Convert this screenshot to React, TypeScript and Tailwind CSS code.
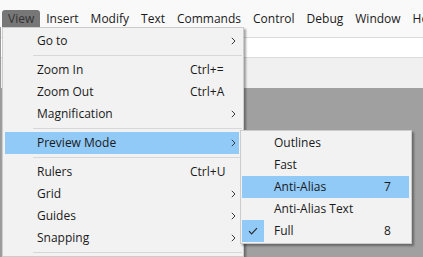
import React from 'react';

const font = { fontFamily: '"Segoe UI", "Open Sans", "Noto Sans", sans-serif' };

function Chevron() {
  return (
    <svg width="5" height="8" viewBox="0 0 5 8" className="block">
      <path d="M0.8 0.8 L4 4 L0.8 7.2" fill="none" stroke="#3a3a3a" strokeWidth="1" />
    </svg>
  );
}

function Check() {
  return (
    <svg width="10" height="8" viewBox="0 0 10 8" className="block">
      <path d="M1 4.2 L3.6 6.8 L9 1.2" fill="none" stroke="#2b2b2b" strokeWidth="1.2" />
    </svg>
  );
}

type Item =
  | { sep: true }
  | { label: string; shortcut?: string; sub?: boolean; active?: boolean; checked?: boolean };

const mainItems: Item[] = [
  { label: 'Go to', sub: true },
  { sep: true },
  { label: 'Zoom In', shortcut: 'Ctrl+=' },
  { label: 'Zoom Out', shortcut: 'Ctrl+A' },
  { label: 'Magnification', sub: true },
  { sep: true },
  { label: 'Preview Mode', sub: true, active: true },
  { sep: true },
  { label: 'Rulers', shortcut: 'Ctrl+U' },
  { label: 'Grid', sub: true },
  { label: 'Guides', sub: true },
  { label: 'Snapping', sub: true },
  { sep: true },
];

const previewItems: Item[] = [
  { label: 'Outlines' },
  { label: 'Fast' },
  { label: 'Anti-Alias', shortcut: '7', active: true },
  { label: 'Anti-Alias Text' },
  { label: 'Full', shortcut: '8', checked: true },
];

const menuBar = ['View', 'Insert', 'Modify', 'Text', 'Commands', 'Control', 'Debug', 'Window', 'Help'];

export default function App() {
  return (
    <div className="relative w-[423px] h-[257px] overflow-hidden bg-[#a0a0a0] text-[12px] text-[#1a1a1a]" style={font}>
      {/* window frame */}
      <div className="flex flex-col">
        <div className="h-[38px] bg-[#f9f9f9] border-b border-[#dadada] flex items-end pb-[10px] pl-[2px] overflow-hidden">
          {menuBar.map((m) => (
            <span
              key={m}
              className={`shrink-0 px-[6px] leading-[17px] whitespace-nowrap ${m === 'View' ? 'bg-[#777777] text-[#333] rounded-t-[3px]' : ''}`}
            >
              {m}
            </span>
          ))}
        </div>
        <div className="h-[20px] bg-white border-b border-[#dadada]" />
        <div className="h-[30px] bg-[#f0f0f0]" />
      </div>

      <div className="absolute left-0 top-[27px] w-[1px] h-[230px] bg-[#9a9a9a]" />

      {/* View menu */}
      <div className="absolute left-[2px] top-[27px] w-[242px] bg-[#f2f2f2] border border-[#cccccc] shadow-[2px_2px_2px_rgba(0,0,0,0.35)] pt-[2px] px-[1px]">
        {mainItems.map((it, i) =>
          'sep' in it ? (
            <div key={i} className="h-[7px] flex items-center pl-[29px]">
              <div className="h-[1px] w-full bg-[#d7d7d7]" />
            </div>
          ) : (
            <div
              key={i}
              className={`h-[22px] flex items-center pl-[32px] mr-[3px] ml-[1px] ${it.active ? 'bg-[#91c9f7]' : ''}`}
            >
              <span className="w-[153px] whitespace-nowrap">{it.label}</span>
              <span className="w-[41px] whitespace-nowrap">{it.shortcut}</span>
              {it.sub && <Chevron />}
            </div>
          )
        )}
      </div>

      {/* Preview Mode submenu */}
      <div className="absolute left-[240px] top-[130px] w-[172px] bg-[#f2f2f2] border border-[#cccccc] shadow-[2px_2px_2px_rgba(0,0,0,0.35)] py-[1px] pl-[1px] pr-[2px]">
        {previewItems.map((it, i) =>
          'sep' in it ? null : (
            <div key={i} className={`h-[22px] flex items-center ${it.active ? 'bg-[#91c9f7]' : ''}`}>
              <span className={`w-[22px] h-[22px] flex items-center justify-center ${it.checked ? 'bg-[#91c9f7]' : ''}`}>
                {it.checked && <Check />}
              </span>
              <span className="ml-[10px] w-[110px] whitespace-nowrap">{it.label}</span>
              <span className="whitespace-nowrap">{it.shortcut}</span>
            </div>
          )
        )}
      </div>
    </div>
  );
}
